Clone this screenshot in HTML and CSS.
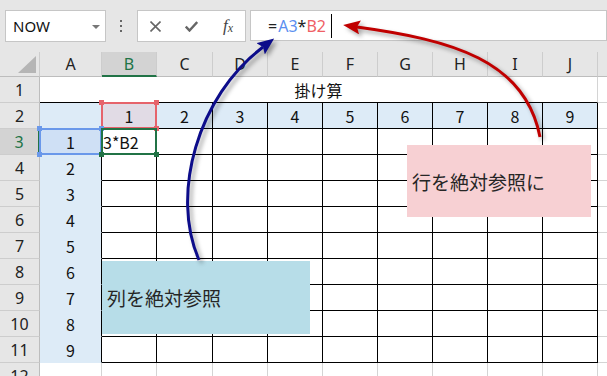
FILE: index.html
```html
<!DOCTYPE html>
<html lang="ja">
<head>
    <meta charset="UTF-8">
    <meta name="viewport" content="width=device-width, initial-scale=1.0">
    <title>掛け算</title>
    <link rel="stylesheet" href="styles.css">
</head>
<body>
    <div class="app">
        <div class="formula-bar">
            <div class="name-box">
                <span>NOW</span>
                <svg class="drop" width="8" height="4" viewBox="0 0 8 4"><path d="M0,0 L8,0 L4,4 z" fill="#777"/></svg>
            </div>
            <div class="grip">
                <svg width="3" height="12" viewBox="0 0 3 12"><rect x="0" y="0" width="2" height="2" fill="#666"/><rect x="0" y="5" width="2" height="2" fill="#666"/><rect x="0" y="10" width="2" height="2" fill="#666"/></svg>
            </div>
            <div class="fx-buttons">
                <span class="fx-btn">
                    <svg width="11" height="11" viewBox="0 0 11 11"><path d="M0.5,0.5 L10.5,10.5 M10.5,0.5 L0.5,10.5" stroke="#666" stroke-width="1.6"/></svg>
                </span>
                <span class="fx-btn">
                    <svg width="13" height="11" viewBox="0 0 13 11"><path d="M0.8,5.5 L4.5,9.5 L12.2,1" stroke="#666" stroke-width="2.4" fill="none"/></svg>
                </span>
                <span class="fx-btn fx">f<span class="fx-x">x</span></span>
            </div>
            <div class="formula-input">
                <span>=</span><span class="ref-a">A3</span><span>*</span><span class="ref-b">B2</span><span class="caret"></span>
            </div>
        </div>

        <table class="grid">
            <colgroup>
                <col class="c-rh"><col class="c-a"><col class="c-n"><col class="c-c"><col class="c-n"><col class="c-n"><col class="c-n"><col class="c-n"><col class="c-n"><col class="c-n"><col class="c-n"><col class="c-k">
            </colgroup>
            <thead>
                <tr class="hdr-row">
                    <th class="corner"></th>
                    <th>A</th><th class="sel-col">B</th><th>C</th><th>D</th><th>E</th><th>F</th><th>G</th><th>H</th><th>I</th><th>J</th><th></th>
                </tr>
            </thead>
            <tbody>
                <tr>
                    <th class="rh">1</th>
                    <td class="title" colspan="10">掛け算</td>
                    <td></td>
                </tr>
                <tr>
                    <th class="rh">2</th>
                    <td class="side"></td>
                    <td class="hd pin"><div class="ref ref-red"><i class="tl"></i><i class="tr"></i><i class="bl"></i><i class="br"></i></div>1</td>
                    <td class="hd">2</td><td class="hd">3</td><td class="hd">4</td><td class="hd">5</td><td class="hd">6</td><td class="hd">7</td><td class="hd">8</td><td class="hd">9</td>
                    <td></td>
                </tr>
                <tr>
                    <th class="rh sel-row">3</th>
                    <td class="side picked pin"><div class="ref ref-blue"><i class="tl"></i><i class="tr"></i><i class="bl"></i><i class="br"></i></div>1</td>
                    <td class="box editing pin"><div class="ref ref-green"><i class="tl"></i><i class="tr"></i><i class="bl"></i><i class="br"></i></div>3*B2</td>
                    <td class="box"></td><td class="box"></td><td class="box"></td><td class="box"></td><td class="box"></td><td class="box"></td><td class="box"></td><td class="box"></td>
                    <td></td>
                </tr>
                <tr>
                    <th class="rh">4</th><td class="side">2</td>
                    <td class="box"></td><td class="box"></td><td class="box"></td><td class="box"></td><td class="box"></td><td class="box"></td><td class="box"></td><td class="box"></td><td class="box"></td>
                    <td></td>
                </tr>
                <tr>
                    <th class="rh">5</th><td class="side">3</td>
                    <td class="box"></td><td class="box"></td><td class="box"></td><td class="box"></td><td class="box"></td><td class="box"></td><td class="box"></td><td class="box"></td><td class="box"></td>
                    <td></td>
                </tr>
                <tr>
                    <th class="rh">6</th><td class="side">4</td>
                    <td class="box"></td><td class="box"></td><td class="box"></td><td class="box"></td><td class="box"></td><td class="box"></td><td class="box"></td><td class="box"></td><td class="box"></td>
                    <td></td>
                </tr>
                <tr>
                    <th class="rh">7</th><td class="side">5</td>
                    <td class="box"></td><td class="box"></td><td class="box"></td><td class="box"></td><td class="box"></td><td class="box"></td><td class="box"></td><td class="box"></td><td class="box"></td>
                    <td></td>
                </tr>
                <tr>
                    <th class="rh">8</th><td class="side">6</td>
                    <td class="box"></td><td class="box"></td><td class="box"></td><td class="box"></td><td class="box"></td><td class="box"></td><td class="box"></td><td class="box"></td><td class="box"></td>
                    <td></td>
                </tr>
                <tr>
                    <th class="rh">9</th><td class="side">7</td>
                    <td class="box"></td><td class="box"></td><td class="box"></td><td class="box"></td><td class="box"></td><td class="box"></td><td class="box"></td><td class="box"></td><td class="box"></td>
                    <td></td>
                </tr>
                <tr>
                    <th class="rh">10</th><td class="side">8</td>
                    <td class="box"></td><td class="box"></td><td class="box"></td><td class="box"></td><td class="box"></td><td class="box"></td><td class="box"></td><td class="box"></td><td class="box"></td>
                    <td></td>
                </tr>
                <tr>
                    <th class="rh">11</th><td class="side">9</td>
                    <td class="box"></td><td class="box"></td><td class="box"></td><td class="box"></td><td class="box"></td><td class="box"></td><td class="box"></td><td class="box"></td><td class="box"></td>
                    <td></td>
                </tr>
                <tr>
                    <th class="rh">12</th><td></td>
                    <td></td><td></td><td></td><td></td><td></td><td></td><td></td><td></td><td></td>
                    <td></td>
                </tr>
            </tbody>
        </table>

        <!-- callouts and arrows drawn over the sheet -->
        <div class="note note-row">行を絶対参照に</div>
        <div class="note note-col">列を絶対参照</div>

        <svg class="arrows" width="607" height="376" viewBox="0 0 607 376">
            <defs>
                <marker id="head-blue" markerWidth="17" markerHeight="14" refX="3" refY="7" orient="auto" markerUnits="userSpaceOnUse">
                    <path d="M0,0 L17,7 L0,14 L3,7 z" fill="#0c0c8a"/>
                </marker>
                <marker id="head-red" markerWidth="17" markerHeight="14" refX="3" refY="7" orient="auto" markerUnits="userSpaceOnUse">
                    <path d="M0,0 L17,7 L0,14 L3,7 z" fill="#c00000"/>
                </marker>
            </defs>
            <g class="arrow-shadow">
                <path d="M199,260 C170,194 198,96 263,47" stroke="#0c0c8a" stroke-width="3" fill="none" marker-end="url(#head-blue)"/>
                <path d="M540,137 C525,60 452,40 357,27" stroke="#c00000" stroke-width="3" fill="none" marker-end="url(#head-red)"/>
            </g>
        </svg>
    </div>
</body>
</html>
```

FILE: styles.css
```css
* {
    box-sizing: border-box;
}
body {
    margin: 0;
    font-family: "Noto Sans", "Noto Sans CJK JP", sans-serif;
    background-color: #fff;
    color: #222;
}
.app {
    position: relative;
    width: 607px;
    height: 376px;
    overflow: hidden;
}

/* formula bar */
.formula-bar {
    display: flex;
    align-items: flex-start;
    height: 52px;
    padding-top: 10px;
    background-color: #e6e6e6;
}
.name-box {
    display: flex;
    align-items: center;
    justify-content: space-between;
    width: 101px;
    height: 32px;
    margin-left: 5px;
    padding: 0 5px 0 7px;
    background-color: #fff;
    border: 1px solid #c6c6c6;
    font-size: 15px;
    color: #111;
}
.name-box .drop {
    margin-top: 1px;
}
.grip {
    display: flex;
    align-items: center;
    justify-content: center;
    width: 31px;
    height: 32px;
}
.fx-buttons {
    display: flex;
    align-items: center;
    width: 109px;
    height: 32px;
    background-color: #fff;
    border: 1px solid #c6c6c6;
}
.fx-btn {
    display: flex;
    align-items: center;
    justify-content: center;
    width: 36px;
    height: 30px;
}
.fx {
    font-family: "Liberation Serif", serif;
    font-style: italic;
    font-size: 17px;
    color: #444;
    padding-left: 2px;
}
.fx-x {
    font-size: 12px;
    margin-top: 5px;
}
.formula-input {
    display: flex;
    align-items: center;
    flex: 1;
    height: 31px;
    margin-left: 4px;
    padding-left: 17px;
    background-color: #fff;
    border: 1px solid #c6c6c6;
    font-size: 16px;
    color: #222;
}
.ref-a {
    color: #5b8ff0;
    margin-left: 1px;
}
.ref-b {
    color: #ef5f66;
}
.caret {
    display: inline-block;
    width: 1px;
    height: 24px;
    margin-left: 5px;
    background-color: #000;
}

/* sheet grid */
.grid {
    border-collapse: separate;
    border-spacing: 0;
    table-layout: fixed;
    width: 658px;
}
.c-rh { width: 40px; }
.c-a { width: 62px; }
.c-n { width: 55px; }
.c-c { width: 56px; }
.c-k { width: 60px; }
.grid tr {
    height: 26px;
}
.grid .hdr-row {
    height: 25px;
}
.grid th,
.grid td {
    padding: 0;
    text-align: center;
    font-weight: normal;
    font-size: 16px;
    line-height: 1;
    border-right: 1px solid #d4d4d4;
    border-bottom: 1px solid #d4d4d4;
    white-space: nowrap;
}
.grid td {
    font-family: "Noto Sans CJK JP", sans-serif;
    color: #111;
}
.hdr-row th {
    background-color: #e6e6e6;
    border-right-color: #cdcdcd;
    border-bottom-color: #bdbdbd;
    color: #222;
}
.hdr-row th.sel-col {
    background-color: #d3d3d3;
    border-bottom: 2px solid #217346;
    color: #217346;
}
.corner {
    position: relative;
}
.corner::after {
    content: "";
    position: absolute;
    right: 3px;
    bottom: 3px;
    width: 18px;
    height: 17px;
    background-color: #b5b5b5;
    clip-path: polygon(100% 0, 100% 100%, 0 100%);
}
.grid .rh {
    background-color: #e6e6e6;
    border-right-color: #bdbdbd;
    border-bottom-color: #cdcdcd;
    color: #222;
}
.grid .rh.sel-row {
    background-color: #d3d3d3;
    border-right: 2px solid #217346;
    color: #217346;
}
.grid .title {
    border-bottom-color: #000;
}
.grid .side {
    background-color: #ddebf7;
    border-right-color: #000;
    border-bottom-color: #ddebf7;
}
.grid .side.picked {
    background-color: #cfe0f5;
}
.grid .hd {
    background-color: #ddebf7;
    border-right-color: #000;
    border-bottom-color: #000;
}
.grid .box {
    border-right-color: #000;
    border-bottom-color: #000;
}
.grid .editing {
    text-align: left;
    padding-left: 1px;
}

/* reference highlights */
.pin {
    position: relative;
}
.grid .hd.pin {
    background-color: #e1dbe5;
}
.ref {
    position: absolute;
    top: -1px;
    left: -1px;
    right: -1px;
    bottom: -1px;
    border: 2px solid;
}
.ref i {
    position: absolute;
    width: 5px;
    height: 5px;
}
.ref .tl { top: -4px; left: -4px; }
.ref .tr { top: -4px; right: -4px; }
.ref .bl { bottom: -4px; left: -4px; }
.ref .br { bottom: -4px; right: -4px; }
.ref-red { border-color: #e6636b; }
.ref-red i { background-color: #e6636b; }
.ref-blue { border-color: #6a98ea; }
.ref-blue i { background-color: #6a98ea; }
.ref-green { border-color: #217346; }
.ref-green i { background-color: #217346; }
.ref-green .tl,
.ref-green .tr {
    display: none;
}

/* callouts */
.note {
    position: absolute;
    display: flex;
    align-items: center;
    padding-left: 5px;
    font-family: "Noto Sans CJK JP", sans-serif;
    font-size: 19px;
    color: #262626;
}
.note-col {
    left: 102px;
    top: 261px;
    width: 208px;
    height: 73px;
    background-color: #b7dde8;
}
.note-row {
    left: 407px;
    top: 145px;
    width: 184px;
    height: 72px;
    background-color: #f7d0d3;
}
.arrows {
    position: absolute;
    top: 0;
    left: 0;
    pointer-events: none;
}
.arrow-shadow {
    filter: drop-shadow(3px 3px 2px rgba(0, 0, 0, 0.35));
}
```
